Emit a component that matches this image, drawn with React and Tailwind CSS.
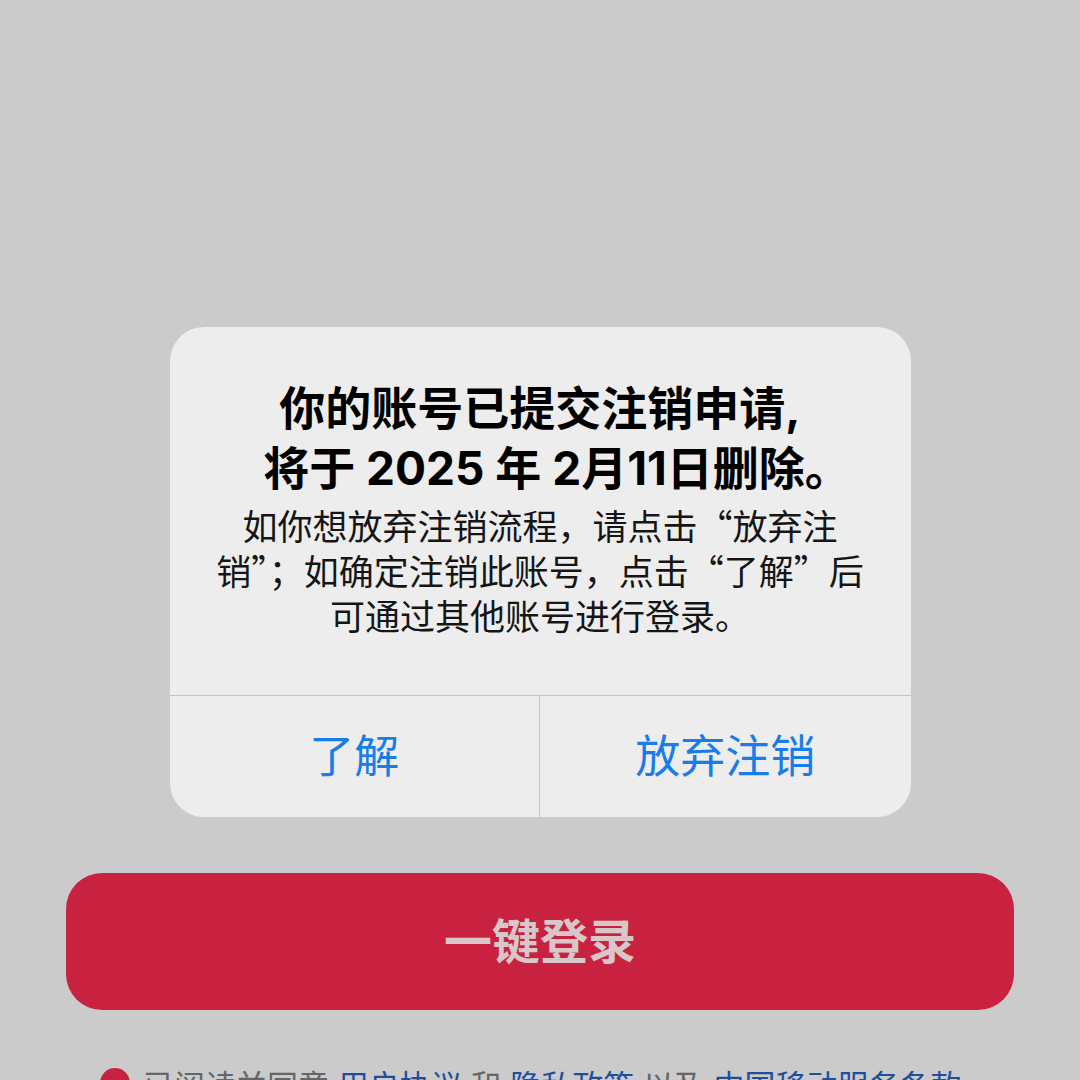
import React from "react";

const font = { fontFamily: '"Inter", "Noto Sans CJK SC", sans-serif' };
const cjk = { fontFamily: '"Noto Sans CJK SC", sans-serif' };

export default function App() {
  return (
    <div
      className="h-[1080px] w-[1080px] overflow-hidden bg-[#cbcbcb] flex flex-col items-center pt-[327px]"
      style={font}
    >
      {/* Alert */}
      <div className="shrink-0 w-[741px] rounded-[34px] bg-[#ededed] overflow-hidden">
        <div className="px-4 pt-[51px] pb-[58px] text-center">
          <h2 className="text-[46px] leading-[60px] font-bold text-black whitespace-nowrap">
            你的账号已提交注销申请,
            <br />
            <span className="pl-[34px]">将于 2025 年 2月11日删除。</span>
          </h2>
          <p
            className="mt-[4px] text-[35px] leading-[45px] text-[#151515] whitespace-nowrap"
            style={cjk}
          >
            如你想放弃注销流程，请点击“放弃注
            <br />
            销”；如确定注销此账号，点击“了解”后
            <br />
            可通过其他账号进行登录。
          </p>
        </div>
        <div className="grid grid-cols-2 border-t border-[#c4c4c4] h-[122px]">
          <button className="flex items-center justify-center text-[45px] text-[#1a7ce8] border-r border-[#c4c4c4]">
            了解
          </button>
          <button className="flex items-center justify-center text-[45px] text-[#1a7ce8]">
            放弃注销
          </button>
        </div>
      </div>

      {/* Login button */}
      <button className="shrink-0 mt-[56px] w-[948px] h-[137px] rounded-[36px] bg-[#c82240] flex items-center justify-center text-[48px] font-semibold text-[#d9c6c9]">
        一键登录
      </button>

      {/* Agreement */}
      <div className="shrink-0 mt-[56px] w-[948px] flex items-start gap-[13px] pl-[34px]">
        <span className="mt-[2px] w-[30px] h-[30px] rounded-full bg-[#c82240] shrink-0" />
        <p className="text-[31px] leading-[40px] text-[#666] whitespace-nowrap">
          已阅读并同意 <span className="text-[#1f4f9a]">用户协议</span> 和{" "}
          <span className="text-[#1f4f9a]">隐私政策</span> 以及{" "}
          <span className="text-[#1f4f9a]">中国移动服务条款</span>
        </p>
      </div>
    </div>
  );
}
